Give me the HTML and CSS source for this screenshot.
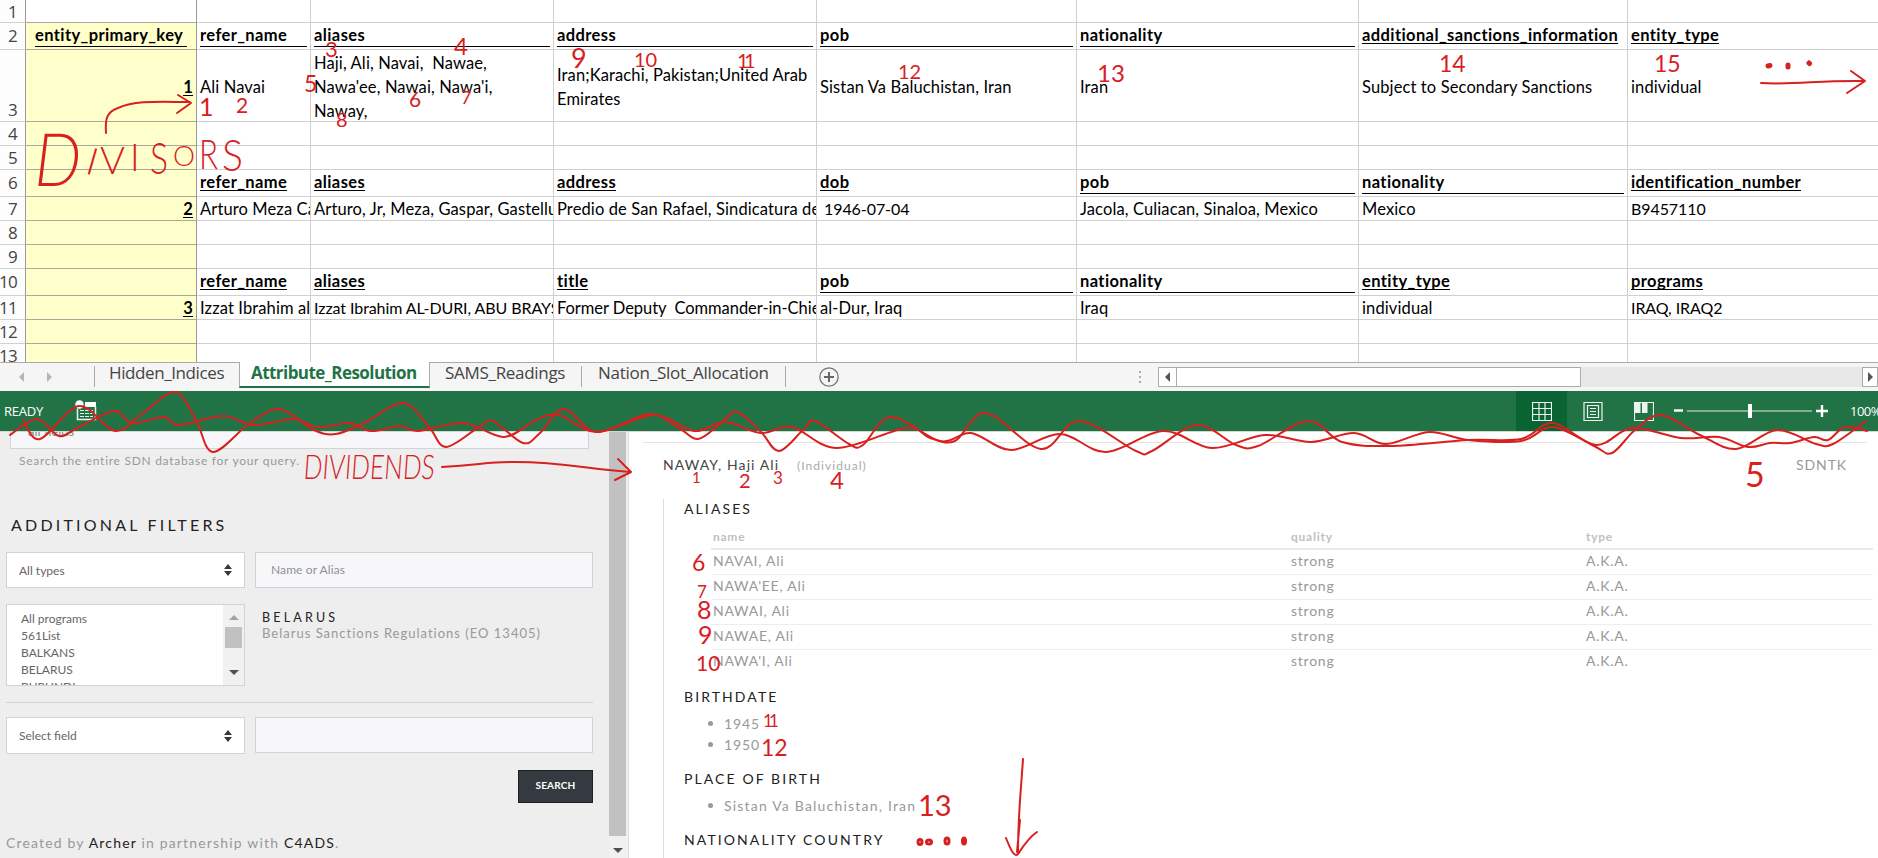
FILE: index.html
```html
<!DOCTYPE html>
<html lang="en">
<head>
<meta charset="utf-8">
<title>Attribute Resolution</title>
<link rel="stylesheet" href="styles.css">
</head>
<body>
<main class="screen">
  <section class="sheet">
    <div class="row r1"><b class="num">1</b><i class="key"></i><i></i><i></i><i></i><i></i><i></i><i></i><i></i></div>
    <div class="row head r2"><b class="num">2</b><i class="key"><u class="full kh">entity_primary_key</u></i><i><u class="full">refer_name</u></i><i><u class="full">aliases</u></i><i><u class="full">address</u></i><i><u class="full">pob</u></i><i><u class="full">nationality</u></i><i><u>additional_sanctions_information</u></i><i><u>entity_type</u></i></div>
    <div class="row tall"><b class="num">3</b><i class="key"><u>1</u></i><i>Ali Navai</i><i>Haji, Ali, Navai,&nbsp; Nawae,<br>Nawa'ee, Nawai, Nawa'i,<br>Naway,</i><i>Iran;Karachi, Pakistan;United Arab<br>Emirates</i><i>Sistan Va Baluchistan, Iran</i><i>Iran</i><i>Subject to Secondary Sanctions</i><i>individual</i></div>
    <div class="row"><b class="num">4</b><i class="key"></i><i></i><i></i><i></i><i></i><i></i><i></i><i></i></div>
    <div class="row"><b class="num">5</b><i class="key"></i><i></i><i></i><i></i><i></i><i></i><i></i><i></i></div>
    <div class="row head"><b class="num">6</b><i class="key"></i><i><u>refer_name</u></i><i><u>aliases</u></i><i><u>address</u></i><i><u>dob</u></i><i><u class="full">pob</u></i><i><u class="full">nationality</u></i><i><u>identification_number</u></i></div>
    <div class="row"><b class="num">7</b><i class="key"><u>2</u></i><i>Arturo Meza Cazarez</i><i>Arturo, Jr, Meza, Gaspar, Gastellum</i><i>Predio de San Rafael, Sindicatura de</i><i class="caps">&nbsp;1946-07-04</i><i>Jacola, Culiacan, Sinaloa, Mexico</i><i>Mexico</i><i class="caps">B9457110</i></div>
    <div class="row"><b class="num">8</b><i class="key"></i><i></i><i></i><i></i><i></i><i></i><i></i><i></i></div>
    <div class="row"><b class="num">9</b><i class="key"></i><i></i><i></i><i></i><i></i><i></i><i></i><i></i></div>
    <div class="row head"><b class="num">10</b><i class="key"></i><i><u>refer_name</u></i><i><u>aliases</u></i><i><u>title</u></i><i><u class="full">pob</u></i><i><u class="full">nationality</u></i><i><u>entity_type</u></i><i><u>programs</u></i></div>
    <div class="row"><b class="num">11</b><i class="key"><u>3</u></i><i>Izzat Ibrahim al-Duri</i><i class="caps">Izzat Ibrahim AL-DURI, ABU BRAYS</i><i class="snug">Former Deputy&nbsp; Commander-in-Chief</i><i>al-Dur, Iraq</i><i>Iraq</i><i>individual</i><i class="caps">IRAQ, IRAQ2</i></div>
    <div class="row"><b class="num">12</b><i class="key"></i><i></i><i></i><i></i><i></i><i></i><i></i><i></i></div>
    <div class="row last"><b class="num">13</b><i class="key"></i><i></i><i></i><i></i><i></i><i></i><i></i><i></i></div>
  </section>

  <nav class="tabs">
    <svg class="tabnav" width="94" height="28"><path d="M24 9v10l-5-5zM47 9v10l5-5z" fill="#b5b5b5"/></svg>
    <span class="tab t1">Hidden_Indices</span>
    <span class="tab active">Attribute_Resolution</span>
    <span class="tab t3">SAMS_Readings</span>
    <span class="tab t4">Nation_Slot_Allocation</span>
    <svg class="add" width="22" height="28"><circle cx="11" cy="14" r="9.2" fill="none" stroke="#777" stroke-width="1.3"/><path d="M6 14h10M11 9v10" stroke="#666" stroke-width="2"/></svg>
    <svg class="grip" width="4" height="28"><path d="M2 8v12" stroke="#aaa" stroke-width="2" stroke-dasharray="2 3"/></svg>
    <div class="hscroll"><span class="hbtn"><svg width="8" height="10"><path d="M6 0v10L1 5z" fill="#555"/></svg></span><span class="hthumb"></span><span class="hbtn end"><svg width="8" height="10"><path d="M2 0v10l5-5z" fill="#555"/></svg></span></div>
  </nav>

  <div class="status">
    <span class="ready">READY</span>
    <svg class="macro" width="22" height="22"><path d="M2.500 8.500v11h18v-13" fill="none" stroke="#e9f3ed" stroke-width="1.500"/><path d="M10 2h11v5H10z" fill="#fff"/><circle cx="4.500" cy="4.500" r="4.200" fill="#fff"/><path d="M5 10.500h13M5 13.500h13M5 16.500h13" stroke="#e9f3ed" stroke-dasharray="4 1"/></svg>
    <span class="view on"><svg width="20" height="19"><path d="M.5.5h19v18H.5zM7 0v19M13 0v19M0 6.500h20M0 12.500h20" fill="none" stroke="#eaf5ee" stroke-width="1.200"/></svg></span>
    <span class="view"><svg width="20" height="19"><path d="M1 .5h18v18H1zM4.500 3.500h11v12h-11zM7 6.500h6M7 9.500h6M7 12.500h6" fill="none" stroke="#eaf5ee" stroke-width="1.200"/></svg></span>
    <span class="view"><svg width="20" height="19"><path d="M.5.500h19v18H.500z" fill="none" stroke="#eaf5ee" stroke-width="1.200"/><path d="M1 1h5.500v10H1zM8 1h5.500v10H8z" fill="#eaf5ee"/></svg></span>
    <svg class="zoom" width="158" height="20"><path d="M2 9.500h9" stroke="#fff" stroke-width="2.400"/><path d="M15 10h125" stroke="#dcebe2"/><path d="M78 3v14" stroke="#fff" stroke-width="4"/><path d="M144 10h12M150 4v12" stroke="#fff" stroke-width="2.400"/></svg>
    <span class="pct">100%</span>
  </div>

  <div class="lower">
    <aside class="filters">
      <div class="query"><span>all fields</span></div>
      <p class="hint">Search the entire SDN database for your query.</p>
      <h2>ADDITIONAL FILTERS</h2>
      <div class="pair">
        <div class="select">All types<svg width="8" height="12"><path d="M4 0l4 5H0zM4 12l4-5H0z" fill="#343a40"/></svg></div>
        <div class="field">Name or Alias</div>
      </div>
      <div class="pair programs">
        <div class="list">
          <div class="items"><span>All programs</span><span>561List</span><span>BALKANS</span><span>BELARUS</span><span>BURUNDI</span></div>
          <div class="vbar"><svg width="10" height="5"><path d="M0 5l5-5 5 5z" fill="#a3a3a3"/></svg><em></em><svg width="10" height="5"><path d="M0 0l5 5 5-5z" fill="#505050"/></svg></div>
        </div>
        <div class="program"><h3>BELARUS</h3><p>Belarus Sanctions Regulations (EO 13405)</p></div>
      </div>
      <hr>
      <div class="pair second">
        <div class="select">Select field<svg width="8" height="12"><path d="M4 0l4 5H0zM4 12l4-5H0z" fill="#343a40"/></svg></div>
        <div class="field"></div>
      </div>
      <button class="search">SEARCH</button>
      <p class="credit">Created by <a>Archer</a> in partnership with <a>C4ADS</a>.</p>
    </aside>
    <div class="pagebar"><em></em><svg width="10" height="5"><path d="M0 0l5 5 5-5z" fill="#505050"/></svg></div>
    <article class="result">
      <header><span class="name">NAWAY, Haji Ali</span><span class="kind">(Individual)</span><span class="prog">SDNTK</span></header>
      <div class="detail">
        <h4 class="alias">ALIASES</h4>
        <div class="table">
          <div class="tr th"><span>name</span><span>quality</span><span>type</span></div>
          <div class="tr"><span>NAVAI, Ali</span><span>strong</span><span>A.K.A.</span></div>
          <div class="tr"><span>NAWA'EE, Ali</span><span>strong</span><span>A.K.A.</span></div>
          <div class="tr"><span>NAWAI, Ali</span><span>strong</span><span>A.K.A.</span></div>
          <div class="tr"><span>NAWAE, Ali</span><span>strong</span><span>A.K.A.</span></div>
          <div class="tr"><span>NAWA'I, Ali</span><span>strong</span><span>A.K.A.</span></div>
        </div>
        <h4 class="birth">BIRTHDATE</h4>
        <ul><li>1945</li><li>1950</li></ul>
        <h4 class="place">PLACE OF BIRTH</h4>
        <ul class="wide"><li>Sistan Va Baluchistan, Iran</li></ul>
        <h4 class="nation">NATIONALITY COUNTRY</h4>
      </div>
    </article>
  </div>

  <svg class="ink" width="1878" height="858" viewBox="0 0 1878 858">
    <g id="waves"></g>
    <path d="M106 133C105 118 107 112 118 108C136 100 160 102 190 102M178 95L191 103L177 113"/>
    <path d="M1761 83C1795 85 1820 80 1865 81M1851 71L1865 81L1847 93"/>
    <path d="M442 467C480 465 485 462 510 462C560 461 590 470 631 472M618 459L631 472L615 480"/>
    <path d="M1023 759C1021 790 1018 815 1018 853M1020 820L1017 852M1006 838C1010 848 1014 858 1018 854C1022 848 1028 838 1037 832"/>
    <path class="dots" d="M1768 66l2-.5M1788 65v2M1809 63l.5.500"/>
    <g class="rings"><ellipse cx="920" cy="842" rx="2" ry="2.500"/><ellipse cx="929" cy="842" rx="2.500" ry="2"/><ellipse cx="947" cy="841" rx="2" ry="3"/><ellipse cx="964" cy="841" rx="1.500" ry="3"/></g>
    <g class="write">
      <g transform="translate(32 186) skewX(-7) scale(.92 1.12)"><text font-size="66">D</text></g>
      <text><tspan x="84" y="173" font-size="38" rotate="16">I</tspan><tspan x="100" y="174" font-size="38" rotate="0">V</tspan><tspan x="130" y="171" font-size="37">I</tspan></text>
      <text x="150" y="174" font-size="44" textLength="18" lengthAdjust="spacingAndGlyphs">S</text>
      <text x="173" y="166" font-size="27" textLength="22" lengthAdjust="spacingAndGlyphs">O</text>
      <text x="199" y="169" font-size="41" textLength="19" lengthAdjust="spacingAndGlyphs">R</text>
      <text x="222" y="171" font-size="44" textLength="21" lengthAdjust="spacingAndGlyphs">S</text>
      <g transform="translate(0 479) skewX(-4)"><text x="303" y="0" font-size="34" textLength="131" lengthAdjust="spacingAndGlyphs">DIVIDENDS</text></g>
    </g>
    <g class="digits">
      <text x="199" y="116" font-size="25">1</text><text x="236" y="113" font-size="21">2</text><text x="325" y="57" font-size="22">3</text><text x="454" y="55" font-size="24">4</text>
      <text x="304" y="92" font-size="23">5</text><text x="409" y="107" font-size="21">6</text><text x="461" y="104" font-size="18">7</text><text x="336" y="127" font-size="20">8</text>
      <text x="571" y="68" font-size="27">9</text><text x="634" y="67" font-size="20">10</text><text x="737 744" y="68" font-size="20">11</text><text x="898" y="79" font-size="20">12</text>
      <text x="1097" y="82" font-size="24">13</text><text x="1439" y="72" font-size="23">14</text><text x="1654" y="72" font-size="23">15</text><text x="1745" y="487" font-size="34">5</text>
      <text x="692" y="483" font-size="15">1</text><text x="739" y="488" font-size="20">2</text><text x="773" y="484" font-size="17">3</text><text x="830" y="489" font-size="24">4</text>
      <text x="692" y="571" font-size="23">6</text><text x="697" y="598" font-size="17">7</text><text x="697" y="619" font-size="25">8</text><text x="698" y="644" font-size="25">9</text><text x="696" y="671" font-size="21">10</text>
      <text x="763 769" y="727" font-size="17">11</text><text x="761" y="756" font-size="23">12</text><text x="918" y="816" font-size="29">13</text>
    </g>
  </svg>
</main>
<script src="ink.js"></script>
</body>
</html>
```
FILE: styles.css
```css
* { box-sizing: border-box; }
body { margin: 0; background: #fff; }
.screen { position: relative; width: 1878px; height: 858px; overflow: hidden; display: flex; flex-direction: column; }
h2, h3, h4, p, ul { margin: 0; padding: 0; font-weight: 400; }
svg { display: block; flex: none; }

.sheet { height: 362px; overflow: hidden; flex: none; font-family: Lato, sans-serif; font-size: 16.5px; letter-spacing: .12px; color: #000; }
.row { display: grid; grid-template-columns: 26px 171px 114px 243px 263px 260px 282px 269px 300px; height: 24px; line-height: 25px; }
.r1 { height: 23px; }
.head { height: 27px; font-weight: 700; letter-spacing: .4px; }
.tall { height: 72px; line-height: 24px; }
.row > * { border-right: 1px solid #d0d0d0; border-bottom: 1px solid #d0d0d0; font-style: normal; overflow: hidden; white-space: nowrap; padding-left: 3px; }
.row > .caps { font-size: 16px; letter-spacing: -.08px; line-height: 23px; }
.row > .snug { letter-spacing: -.05px; }
.row > .num { font: 400 17px/23px "Open Sans", sans-serif; letter-spacing: -.7px; color: #444; text-align: right; padding: 0 8px 0 0; border-right-color: #999; margin-left: -4px; background: #fdfdfd; }
.head > .num { line-height: 26px; }
.tall > .num { padding-top: 48px; }
.tall > i { display: flex; align-items: center; padding-top: 2px; }
.row > .key { background: #ffffcc; border-right-color: #999; border-bottom-color: #aaa897; text-align: right; justify-content: flex-end; padding-right: 3px; font-weight: 700; }
.r1 > .key { background: #fff; }
u { text-decoration: none; display: inline-block; line-height: 19px; height: 18px; border-bottom: 1px solid #000; vertical-align: top; margin-top: 3px; }
.tall u { margin-top: 0; }
.full { display: block; margin-right: 3px; height: 21px; }
.kh { margin: 3px 6px 0 6px; text-align: left; }

.tabs { height: 29px; flex: none; display: flex; border-top: 1px solid #ababab; background: #f5f5f5; font: 17px/20px "Open Sans", sans-serif; color: #444; }
.tab { height: 21px; margin-top: 3px; white-space: nowrap; border-right: 1px solid #ababab; letter-spacing: -.3px; line-height: 13px; }
.t1 { width: 145px; padding-left: 14px; border-left: 1px solid #ababab; border-right: 0; letter-spacing: -.4px; }
.active { width: 191px; height: 26px; margin-top: -1px; padding: 4px 0 0 11px; background: #fff; border-bottom: 2px solid #217346; border-left: 1px solid #ababab; color: #217346; font-weight: 700; letter-spacing: -.55px; }
.t3 { width: 152px; padding-left: 15px; }
.t4 { width: 204px; padding-left: 16px; letter-spacing: -.25px; }
.add { margin-left: 32px; }
.grip { margin-left: 298px; }
.hscroll { margin: 4px 0 0 16px; height: 20px; width: 720px; display: flex; background: #e8e8e8; }
.hbtn { width: 19px; border: 1px solid #ababab; background: #fff; display: flex; align-items: center; justify-content: center; }
.hthumb { width: 405px; border: 1px solid #ababab; background: #fff; margin-left: -1px; }
.end { margin-left: auto; width: 16px; }

.status { height: 40px; flex: none; display: flex; align-items: center; background: #217346; color: #fff; font: 13px/20px "Open Sans", sans-serif; }
.ready { flex: none; width: 75px; padding-left: 4px; letter-spacing: -.2px; }
.macro { margin-right: 1419px; }
.view { flex: none; width: 51px; height: 40px; display: flex; align-items: center; justify-content: center; }
.on { background: #0a6332; }
.zoom { margin-left: 3px; }
.pct { margin-left: 20px; letter-spacing: -.5px; }

.lower { flex: 1; display: flex; overflow: hidden; border-top: 1px solid #d5d5d5; font-family: Lato, sans-serif; }
.filters { width: 609px; background: #eee; padding: 0 16px 0 6px; }
.query { margin: 0 4px; height: 17px; border: 1px solid #ced4da; border-top: 0; background: #f7f7f9; padding-left: 17px; font-size: 13px; line-height: 4px; color: #888; overflow: hidden; }
.query span { display: block; margin-top: -3px; }
.hint { margin: 3px 0 0 13px; font-size: 12px; line-height: 18px; letter-spacing: .72px; color: #999; white-space: nowrap; }
h2 { margin: 43px 0 0 5px; font-size: 16px; line-height: 24px; letter-spacing: 3.2px; color: #222; }
.pair { display: flex; gap: 10px; margin-top: 15px; font-size: 12px; color: #666; }
.select { width: 239px; height: 36px; border: 1px solid #ced4da; background: #fff; display: flex; align-items: center; justify-content: space-between; padding: 0 12px; }
.field { width: 338px; height: 36px; border: 1px solid #ced4da; background: #f7f7f9; padding-left: 15px; line-height: 34px; color: #8c9297; letter-spacing: .1px; }
.programs { margin-top: 16px; }
.list { width: 239px; height: 82px; border: 1px solid #ced4da; background: #fff; display: flex; }
.items { flex: 1; padding: 5px 0 0 14px; overflow: hidden; }
.items span { display: block; line-height: 17px; }
.vbar { width: 21px; background: #f1f1f1; display: flex; flex-direction: column; align-items: center; padding: 10px 0 10px; }
.vbar em { width: 17px; height: 21px; background: #c1c1c1; margin: 7px 0 auto; }
.program { padding: 6px 0 0 7px; white-space: nowrap; }
h3 { font-size: 12.5px; line-height: 15px; letter-spacing: 3.2px; color: #222; }
.program p { font-size: 13px; line-height: 16px; letter-spacing: 1px; color: #999; }
hr { height: 1px; border: 0; margin: 16px 0 0; background: #ced4da; }
.second { margin-top: 14px; }
.second .select { height: 37px; }
.search { display: block; margin: 16px 0 0 auto; width: 75px; height: 33px; border: 1px solid #1d2124; background: #343a40; color: #fff; font: 700 10px Lato, sans-serif; letter-spacing: .2px; padding: 0 0 3px; }
.credit { margin-top: 30px; font-size: 14px; line-height: 20px; letter-spacing: 1.17px; color: #999; }
.credit a { color: #222; }
.pagebar { width: 20px; background: #f1f1f1; border-right: 1px solid #ddd; display: flex; flex-direction: column; align-items: center; justify-content: space-between; padding: 0 2px 5px 0; }
.pagebar em { width: 17px; height: 404px; background: #c1c1c1; }

.result { flex: 1; padding: 10px 11px 0 14px; }
header { border-top: 1px solid #e3e3e3; height: 60px; display: flex; padding: 12px 20px 0 20px; line-height: 20px; color: #444; }
.name { font-size: 14px; letter-spacing: 1.1px; width: 134px; white-space: nowrap; }
.kind { font-size: 12px; letter-spacing: 1.05px; color: #aaa; line-height: 22px; }
.prog { margin-left: auto; font-size: 14px; letter-spacing: .9px; color: #999; }
.detail { margin-left: 20px; margin-right: -6px; border-left: 1px solid #ddd; padding-left: 20px; height: 360px; }
h4 { font-size: 14px; line-height: 20px; letter-spacing: 2.1px; color: #222; }
.alias { margin-top: -3px; }
.table { margin-left: 27px; padding-top: 7px; font-size: 14px; color: #999; letter-spacing: .75px; }
.tr { display: grid; grid-template-columns: 578px 295px 1fr; height: 25px; line-height: 22px; border-bottom: 1px solid #eee; padding-left: 2px; }
.tr:last-child { border: 0; }
.th { height: 24px; font-size: 12px; font-weight: 700; border-bottom: 2px solid #eaeaea; color: #c0c0c0; }
.birth { margin-top: 12px; }
ul { list-style: none; font-size: 14px; line-height: 21px; color: #999; letter-spacing: .9px; padding: 6px 0 0 40px; }
.wide { letter-spacing: 1.2px; }
li { position: relative; }
li::before { content: ""; position: absolute; left: -16px; top: 8px; width: 5px; height: 5px; border-radius: 50%; background: #999; }
.place { margin-top: 14px; }
.nation { margin-top: 14px; }

.ink { position: absolute; left: 0; top: 0; pointer-events: none; }
.ink path, .rings ellipse { fill: none; stroke: #d8201f; stroke-width: 2; stroke-linecap: round; stroke-linejoin: round; }
.ink .dots { stroke-width: 5; }
.ink .rings ellipse { stroke-width: 3; }
.write, .digits { fill: #d8201f; font-family: Lato, sans-serif; font-weight: 300; }
.digits { font-weight: 400; }
```
FILE: ink.js
```js
// Freehand wave lines: smooth curves through the sampled pen points.
const waves = [
  [10,435,37,419,59,436,79,427,114,411,132,423,164,417,179,425,223,416,254,425,293,419,318,427,350,423,371,431,400,426,418,431,464,423,504,437,536,420,559,415,597,432,654,415,694,431,725,422,761,433,792,427,837,448,906,428,930,438,955,441,986,413,1041,449,1079,421,1136,451,1152,451,1197,425,1236,445,1258,446,1308,421,1342,442,1391,446,1468,440,1521,439,1553,423,1596,445,1632,428,1681,438,1719,437,1748,447,1770,443,1790,443,1814,437,1828,440,1845,427,1867,431],
  [23,420,40,439,79,406,115,431,143,413,175,392,196,420,213,452,250,423,280,409,314,430,336,434,364,423,403,403,429,427,446,447,479,427,493,421,523,443,540,433,564,409,597,432,649,414,679,428,698,439,721,423,737,412,761,432,779,451,803,430,815,421,849,444,863,445,891,417,940,441,971,433,1011,450,1060,434,1106,452,1163,431,1212,448,1265,435,1311,442,1354,433,1386,444,1429,432,1468,440,1521,441,1553,427,1594,446,1612,453,1635,430,1661,415,1700,435,1736,449,1777,430,1816,444,1833,444,1866,421]
];
const group = document.getElementById("waves");
for (const flat of waves) {
  const p = [];
  for (let i = 0; i < flat.length; i += 2) p.push([flat[i], flat[i + 1]]);
  let d = `M${p[0]}`;
  for (let i = 0; i < p.length - 1; i++) {
    const a = p[i - 1] || p[i], b = p[i], c = p[i + 1], e = p[i + 2] || c;
    d += `C${b[0] + (c[0] - a[0]) / 6} ${b[1] + (c[1] - a[1]) / 6} ${c[0] - (e[0] - b[0]) / 6} ${c[1] - (e[1] - b[1]) / 6} ${c}`;
  }
  const path = document.createElementNS("http://www.w3.org/2000/svg", "path");
  path.setAttribute("d", d);
  group.appendChild(path);
}
```
